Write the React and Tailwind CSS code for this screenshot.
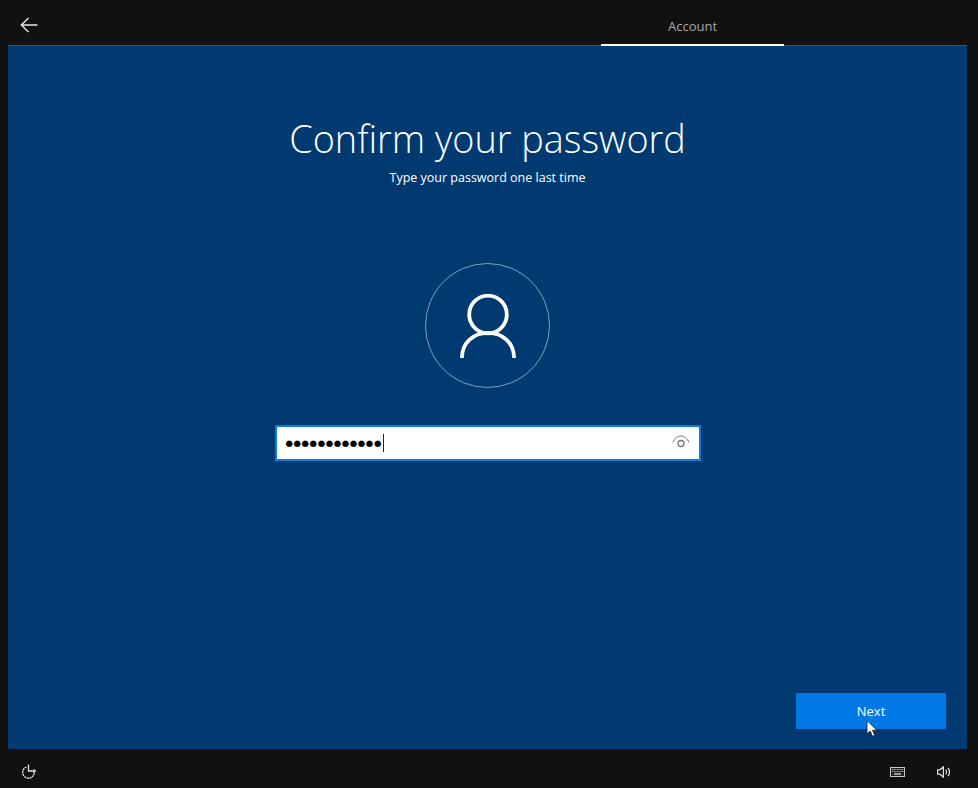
const font = { fontFamily: '"Open Sans", "Liberation Sans", sans-serif' }

function BackArrow() {
  return (
    <svg width="18" height="16" viewBox="0 0 18 16" fill="none" stroke="#e8e8e8" strokeWidth="1.400">
      <path d="M8.500 1 1.300 8l7.200 7M1.300 8H17.500" />
    </svg>
  )
}

function UserIcon() {
  return (
    <svg width="56" height="65" viewBox="0 0 56 65" fill="none" stroke="white" strokeWidth="3.800">
      <circle cx="28" cy="20.500" r="18.800" />
      <path d="M1.900 64C1.900 49 13 38.800 28 38.800S54.100 49 54.100 64" />
    </svg>
  )
}

function EyeIcon() {
  return (
    <svg width="18" height="13" viewBox="0 0 18 13" fill="none" stroke="#767676" strokeWidth="1" className="mb-[4px]">
      <path d="M1 7.500C2.500 3.500 5.500 1 9 1s6.500 2.500 8 6.500" />
      <circle cx="9" cy="8.500" r="3" strokeWidth="1.300" />
    </svg>
  )
}

function ClockIcon() {
  return (
    <svg width="16" height="15" viewBox="0 0 16 15" fill="none" stroke="#e4e4e4" strokeWidth="1.300">
      <path d="M5.500 3a5.800 5.800 0 1 0 7.800 5.500" strokeDasharray="2.200 0.600" />
      <path d="M7.500 .5v6.500h7" />
      <path d="m12.500 5 2 2-2 2" strokeWidth="1" />
    </svg>
  )
}

function KeyboardIcon() {
  return (
    <svg width="15" height="10" viewBox="0 0 15 10" fill="none">
      <rect x="0.500" y="0.500" width="14" height="9" fill="#222" stroke="#c8c8c8" />
      <path d="M2 2.500h11M2 4.500h11" stroke="#b8b8b8" strokeDasharray="1 .7" />
      <path d="M4 7h7" stroke="#d0d0d0" strokeWidth="1.400" />
    </svg>
  )
}

function SpeakerIcon() {
  return (
    <svg width="14" height="12" viewBox="0 0 14 12" fill="none" stroke="#e0e0e0" strokeWidth="1.200">
      <path d="M.6 3.800h2.400L6.400 .8v10.400L3 8.200H.6z" />
      <path d="M8.600 3.800a3 3 0 0 1 0 4.400M10.800 1.800a6 6 0 0 1 0 8.400" />
    </svg>
  )
}

function Cursor() {
  return (
    <svg width="12" height="19" viewBox="0 0 12 18" className="absolute left-[70px] top-[26px]">
      <path d="M1 1v13.500l3.200-3 2.300 5.300 2.300-1-2.300-5.100h4.300z" fill="white" stroke="#1a1a1a" strokeWidth="0.800" />
    </svg>
  )
}

export default function App() {
  return (
    <div className="h-[788px] w-[978px] flex flex-col bg-[#111111] overflow-hidden" style={font}>
      <header className="h-[45px] flex shrink-0 pl-[20px] pr-[194px] justify-between">
        <button className="h-[33px] pt-[17px] flex items-start">
          <BackArrow />
        </button>
        <div className="w-[183px] h-[46px] border-b-2 border-white flex justify-center pt-[17px] text-[13px] leading-[18px] text-[#a8a8a8] relative z-10">
          Account
        </div>
      </header>

      <main className="mx-[8px] w-[959px] h-[704px] shrink-0 bg-[#003a70] border-t border-[#4d4d4d] flex flex-col items-center relative">
        <h1 className="mt-[65px] text-[37.800px] leading-[56px] font-light text-white">Confirm your password</h1>
        <p className="mt-[2px] text-[12.500px] leading-[18px] text-white">Type your password one last time</p>

        <div className="mt-[76px] w-[125px] h-[125px] rounded-full border border-[#7ba3c4] flex items-center justify-center pt-[2px]">
          <UserIcon />
        </div>

        <div className="mt-[37px] w-[426px] h-[36px] bg-white border-2 border-[#0a7ce0] flex items-center justify-between pl-[9px] pr-[9px]">
          <div className="flex items-center">
            <span className="text-[8.500px] leading-none tracking-[0.620px] text-black" style={{ fontFamily: '"DejaVu Sans", sans-serif' }}>
              ●●●●●●●●●●●●
            </span>
            <span className="ml-[1px] w-px h-[18px] bg-[#222222]" />
          </div>
          <EyeIcon />
        </div>

        <div className="mt-auto mb-[20px] self-end mr-[21px]">
          <button className="relative w-[150px] h-[36px] bg-[#0078e6] text-white text-[13px] leading-[36px]">
            Next
            <Cursor />
          </button>
        </div>
      </main>

      <footer className="flex-1 flex items-center justify-between pl-[21px] pr-[27px] pt-[6px]">
        <ClockIcon />
        <div className="flex items-center gap-[32px]">
          <KeyboardIcon />
          <SpeakerIcon />
        </div>
      </footer>
    </div>
  )
}
